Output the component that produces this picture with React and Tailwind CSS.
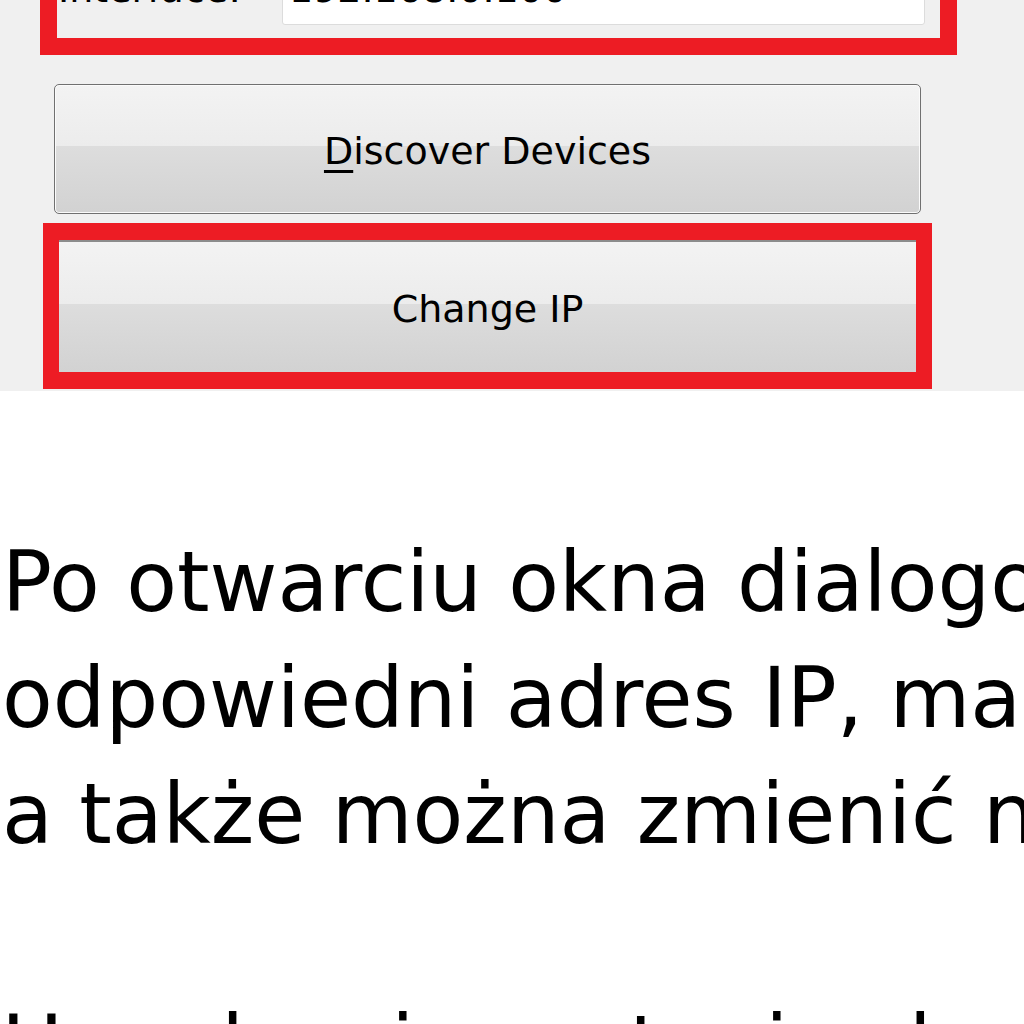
import React from 'react';

// Zrzut okna "Discover Devices" + opis pod spodem
const btnBg =
  'bg-[linear-gradient(to_bottom,#f3f3f3_0%,#ececec_48%,#dddddd_48%,#d2d2d2_100%)]';

const lines = [
  'Po otwarciu okna dialogowego można wprowadzić',
  'odpowiedni adres IP, maskę podsieci i bramę,',
  'a także można zmienić nazwę urządzenia.',
  '',
  'Urządzenie zostanie skonfigurowane ponownie.',
];

export default function App() {
  return (
    <div className="w-[1024px] h-[1024px] overflow-hidden bg-white text-black font-['DejaVu_Sans','Verdana',sans-serif]">
      {/* panel okna */}
      <div className="h-[391px] bg-[#f0f0f0] flex flex-col">
        {/* czerwona ramka wokół pola Interface */}
        <div className="-mt-[52px] ml-[40px] w-[917px] border-[17px] border-[#ed1c24] flex items-start pb-[13px]">
          <div className="w-[225px] pl-[1px] mt-[5px] text-[38px] leading-[38px]">Interface:</div>
          <div className="w-[643px] h-[60px] bg-white border border-[#dcdcdc] rounded-[3px] pt-[4px] pl-[6px] text-[38px] leading-[38px]">
            192.168.0.100
          </div>
        </div>

        <button
          className={`mt-[29px] ml-[54px] w-[867px] h-[130px] rounded-[5px] border border-[#707070] shadow-[inset_0_0_0_1px_#fbfbfb] ${btnBg} flex items-center justify-center pt-[3px] text-[38px] leading-[38px] text-black`}
        >
          <span>
            <span className="underline decoration-[3px] underline-offset-[6px]">D</span>iscover Devices
          </span>
        </button>

        {/* czerwona ramka wokół Change IP */}
        <div className="mt-[9px] ml-[43px] w-[889px] h-[166px] border-x-[16px] border-y-[17px] border-[#ed1c24] flex">
          <button
            className={`flex-1 border-t-[2px] border-[#8c8c8c] ${btnBg} flex items-center justify-center pt-[4px] text-[38px] leading-[38px] text-black`}
          >
            Change IP
          </button>
        </div>
      </div>

      {/* tekst opisu */}
      <div className="pt-[134px] pl-[2px] text-[83px] whitespace-nowrap">
        {lines.map((t, i) => (
          <div key={i} className="h-[116px] leading-[116px]">
            {t}
          </div>
        ))}
      </div>
    </div>
  );
}
